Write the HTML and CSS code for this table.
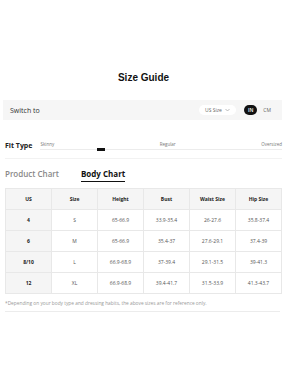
FILE: index.html
```html
<!DOCTYPE html>
<html lang="en">
  <head>
    <meta charset="UTF-8" />
    <meta name="viewport" content="width=device-width, initial-scale=1.0" />
    <title>Size Guide</title>
    <link rel="stylesheet" href="styles.css">
  </head>
  <body>
    <div class="guide">
      <h1 class="title">Size Guide</h1>

      <!-- Switch bar -->
      <div class="switch-bar">
        <span class="switch-label">Switch to</span>
        <div class="switch-right">
          <span class="size-select">US Size
            <svg width="5" height="4" viewBox="0 0 10 6"><path d="M1 1l4 4 4-4" fill="none" stroke="#999" stroke-width="1.3"/></svg>
          </span>
          <span class="unit active">IN</span>
          <span class="unit">CM</span>
        </div>
      </div>

      <!-- Fit type -->
      <div class="fit-row">
        <span class="fit-label">Fit Type</span>
        <div class="fit-scale">
          <div class="fit-names">
            <span>Skinny</span>
            <span>Regular</span>
            <span>Oversized</span>
          </div>
          <div class="fit-track">
            <span class="fit-handle"></span>
          </div>
        </div>
      </div>

      <!-- Tabs -->
      <div class="tabs">
        <span class="tab">Product Chart</span>
        <span class="tab active">Body Chart</span>
      </div>

      <table class="size-table">
        <thead>
          <tr>
            <th>US</th>
            <th>Size</th>
            <th>Height</th>
            <th>Bust</th>
            <th>Waist Size</th>
            <th>Hip Size</th>
          </tr>
        </thead>
        <tbody>
          <tr><th>4</th><td>S</td><td>65-66.9</td><td>33.9-35.4</td><td>26-27.6</td><td>35.8-37.4</td></tr>
          <tr><th>6</th><td>M</td><td>65-66.9</td><td>35.4-37</td><td>27.6-29.1</td><td>37.4-39</td></tr>
          <tr><th>8/10</th><td>L</td><td>66.9-68.9</td><td>37-39.4</td><td>29.1-31.5</td><td>39-41.3</td></tr>
          <tr><th>12</th><td>XL</td><td>66.9-68.9</td><td>39.4-41.7</td><td>31.5-33.9</td><td>41.3-43.7</td></tr>
        </tbody>
      </table>

      <p class="note">*Depending on your body type and dressing habits, the above sizes are for reference only.</p>
    </div>
  </body>
</html>
```

FILE: styles.css
```css
* {
  margin: 0;
  padding: 0;
  box-sizing: border-box;
  font-family: "Open Sans", sans-serif;
}

body {
  background: white;
  color: #222;
}

.guide {
  width: 285px;
  padding: 71px 3px 0 5px;
}

.title {
  font-family: "Liberation Sans", Arial, sans-serif;
  font-size: 10px;
  font-weight: bold;
  text-align: center;
  color: #111;
  line-height: 13px;
  margin-bottom: 16px;
}

/* Switch bar */
.switch-bar {
  display: flex;
  align-items: center;
  justify-content: space-between;
  background: #f6f6f6;
  height: 20px;
  margin-left: -2px;
  padding: 0 8px 0 7px;
}

.switch-label {
  font-size: 7px;
  color: #333;
}

.switch-right {
  display: flex;
  align-items: center;
  gap: 3px;
}

.size-select {
  display: flex;
  align-items: center;
  gap: 3px;
  background: white;
  border-radius: 6px;
  font-size: 5px;
  color: #666;
  padding: 2px 6px;
  margin-right: 5px;
}

.unit {
  font-size: 5px;
  color: #666;
  padding: 1px 3px;
  border-radius: 6px;
}

.unit.active {
  background: #111;
  color: white;
  font-weight: 600;
  padding: 2px 4px;
}

/* Fit type */
.fit-row {
  display: flex;
  align-items: flex-end;
  gap: 8px;
  margin-top: 21px;
  padding-bottom: 7px;
  border-bottom: 1px solid #f2f2f2;
}

.fit-label {
  font-size: 7px;
  font-weight: bold;
  color: #222;
  line-height: 10px;
}

.fit-scale {
  flex: 1;
}

.fit-names {
  display: flex;
  justify-content: space-between;
  font-size: 4.5px;
  color: #777;
  line-height: 6px;
  margin-bottom: 2px;
}

.fit-names span:nth-child(2) {
  margin-left: 20px;
}

.fit-track {
  position: relative;
  height: 1px;
  background: #ececec;
  margin-bottom: 1px;
}

.fit-handle {
  position: absolute;
  left: 57px;
  top: -1px;
  width: 8px;
  height: 3px;
  background: #111;
}

/* Tabs */
.tabs {
  display: flex;
  gap: 22px;
  margin-top: 8px;
  height: 15px;
}

.tab {
  font-size: 8px;
  font-weight: 600;
  color: #888;
  line-height: 13px;
}

.tab.active {
  color: #111;
  font-weight: bold;
  border-bottom: 1.5px solid #111;
}

/* Table */
.size-table {
  width: 277px;
  margin-top: 6px;
  border-collapse: collapse;
  table-layout: fixed;
}

.size-table th,
.size-table td {
  border: 1px solid #e8e8e8;
  height: 21px;
  text-align: center;
  font-size: 5px;
  color: #555;
  font-weight: normal;
}

.size-table thead th {
  background: #f5f5f5;
  color: #222;
  font-weight: bold;
  height: 21px;
}

.size-table tbody th {
  background: #f5f5f5;
  color: #222;
  font-weight: bold;
}

.note {
  font-size: 4.8px;
  color: #999;
  margin-top: 6px;
  padding-bottom: 5px;
  border-bottom: 1px solid #ececec;
  margin-right: 2px;
}
```
